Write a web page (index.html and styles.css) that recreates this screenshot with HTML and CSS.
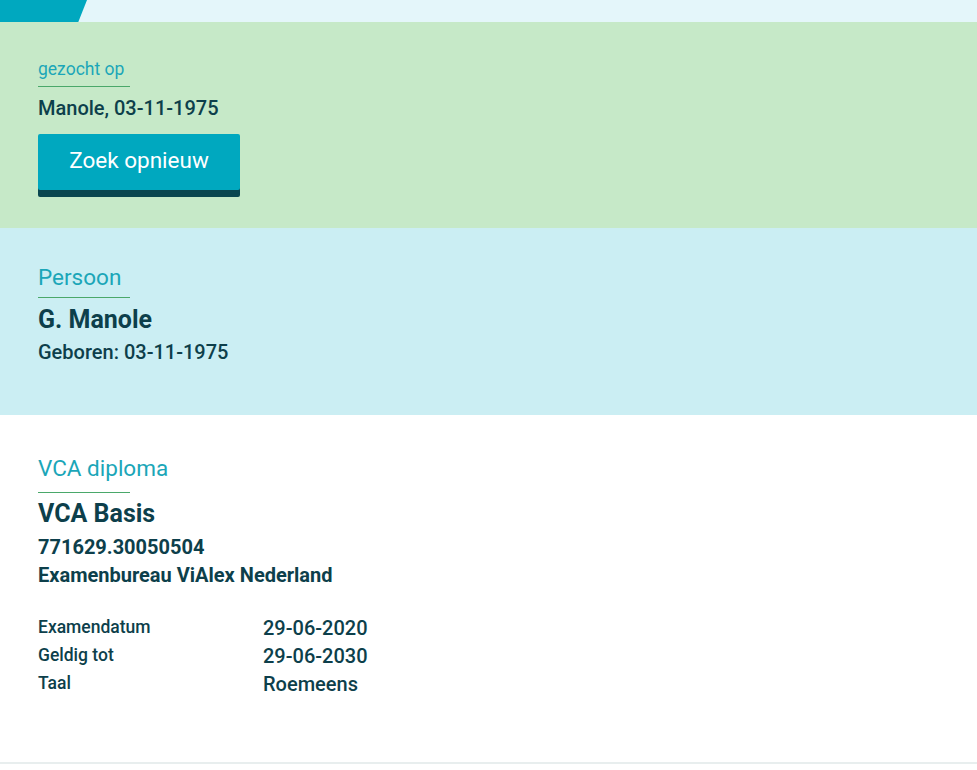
FILE: index.html
```html
<!DOCTYPE html>
<html lang="nl">
<head>
<meta charset="utf-8">
<title>VCA diploma</title>
<link rel="stylesheet" href="styles.css">
</head>
<body>
<header class="topbar"><div class="topbar-accent"></div></header>

<section class="band band-search">
  <div class="label">gezocht op</div>
  <div class="query">Manole, 03-11-1975</div>
  <button class="btn" type="button">Zoek opnieuw</button>
</section>

<section class="band band-person">
  <div class="label label-lg">Persoon</div>
  <div class="name">G. Manole</div>
  <div class="born">Geboren: 03-11-1975</div>
</section>

<section class="band band-diploma">
  <div class="label label-lg">VCA diploma</div>
  <div class="name">VCA Basis</div>
  <div class="meta">771629.30050504</div>
  <div class="meta">Examenbureau ViAlex Nederland</div>
  <dl class="facts">
    <dt>Examendatum</dt><dd>29-06-2020</dd>
    <dt>Geldig tot</dt><dd>29-06-2030</dd>
    <dt>Taal</dt><dd>Roemeens</dd>
  </dl>
</section>
<div class="footer-rule"></div>
</body>
</html>
```

FILE: styles.css
```css
* { box-sizing: border-box; }
html, body { margin: 0; padding: 0; background: #ffffff; }
body {
  font-family: Roboto, "Liberation Sans", Arial, sans-serif;
  color: #0d3f4b;
}
.topbar {
  height: 22px;
  background: #e4f6fa;
}
.topbar-accent {
  width: 87px;
  height: 22px;
  background: #00a8bf;
  clip-path: polygon(0 0, 100% 0, 90% 100%, 0 100%);
}
.band {
  padding: 0 38px;
  display: flex;
  flex-direction: column;
  align-items: flex-start;
}
.band-search {
  background: #c6e9c8;
  height: 206px;
  padding-top: 35px;
}
.band-person {
  background: #cbeef3;
  height: 187px;
  padding-top: 34px;
}
.band-diploma {
  background: #ffffff;
  height: 347px;
  padding-top: 38px;
}
.label {
  width: 92px;
  font-size: 17.5px;
  line-height: 25px;
  color: #1ba6b8;
  padding-bottom: 4px;
  border-bottom: 1px solid #4aa86a;
  white-space: nowrap;
}
.label-lg {
  font-size: 22.5px;
  line-height: 30px;
  padding-bottom: 5px;
}
.band-diploma .label-lg { padding-bottom: 9px; }
.query {
  margin-top: 7px;
  font-size: 20px;
  line-height: 28px;
  font-weight: 500;
}
.btn {
  margin-top: 12px;
  width: 202px;
  height: 56px;
  border: 0;
  border-radius: 2px;
  background: #00a8bf;
  box-shadow: 0 7px 0 #0a4650;
  color: #ffffff;
  font-family: inherit;
  font-size: 22.5px;
  font-weight: 400;
  padding: 0 0 4px;
  cursor: pointer;
}
.name {
  margin-top: 6px;
  font-size: 25px;
  line-height: 32px;
  font-weight: 700;
}
.born {
  margin-top: 2px;
  font-size: 20px;
  line-height: 28px;
  font-weight: 500;
}
.meta {
  font-size: 20px;
  line-height: 28px;
  font-weight: 700;
}
.band-diploma .name { margin-top: 5px; margin-bottom: 3px; }
.facts {
  margin: 24px 0 0;
  display: grid;
  grid-template-columns: 225px auto;
  align-items: start;
}
.facts dt {
  font-size: 17.5px;
  line-height: 28px;
  font-weight: 500;
}
.facts dd {
  margin: 0;
  font-size: 20px;
  line-height: 28px;
  font-weight: 500;
  padding-top: 1px;
  height: 28px;
}
.footer-rule {
  height: 2px;
  background: #e8eeee;
}
```
